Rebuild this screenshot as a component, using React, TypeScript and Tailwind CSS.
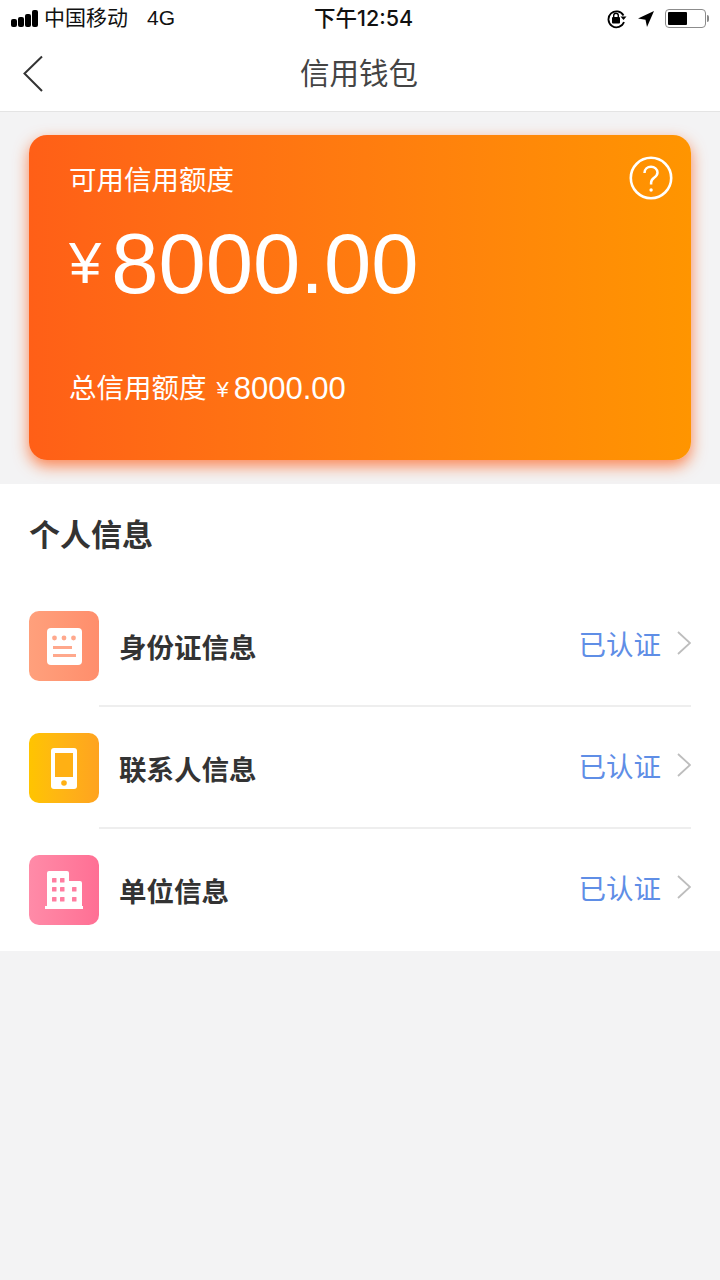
const font = "font-['Liberation_Sans','Noto_Sans_CJK_SC',sans-serif]";

function StatusBar() {
  return (
    <div className="flex h-[37px] items-center pl-[11px] pr-[11px] text-[21px] leading-[37px] text-[#111]">
      <div className="flex w-[303px] items-center">
        <div className="flex items-end gap-[1px]">
          <span className="h-[8px] w-[6px] rounded-[2px] bg-black" />
          <span className="h-[10px] w-[6px] rounded-[2px] bg-black" />
          <span className="h-[13px] w-[6px] rounded-[2px] bg-black" />
          <span className="h-[17px] w-[6px] rounded-[2px] bg-black" />
        </div>
        <span className="ml-[6px] -translate-y-[1px]">中国移动</span>
        <span className="ml-[19px] -translate-y-[1px]">4G</span>
      </div>
      <span className="font-['Inter','Noto_Sans_CJK_SC',sans-serif] text-[21.500px] font-medium">下午12:54</span>
      <div className="ml-auto flex items-center">
        <svg width="22" height="20" viewBox="0 0 22 20" fill="none">
          <path d="M17.500 6.500A8 8 0 1 0 18 13" stroke="#000" strokeWidth="1.800" />
          <path d="M14.500 7.500h6l-3 3.400z" fill="#000" />
          <rect x="6" y="8" width="8" height="6.500" rx="1" fill="#000" />
          <path d="M7.700 8V6.600a2.300 2.300 0 0 1 4.600 0V8" stroke="#000" strokeWidth="1.400" />
        </svg>
        <svg className="ml-[9px]" width="18" height="18" viewBox="0 0 18 18">
          <path d="M17 1 1 8.500l7.500 1.200L10 17z" fill="#000" />
        </svg>
        <div className="ml-[10px] flex items-center">
          <div className="h-[19px] w-[41px] rounded-[4px] border-[1.5px] border-[#8c8c8c] p-[2px]">
            <div className="h-full w-[19px] rounded-[1px] bg-black" />
          </div>
          <span className="ml-[1px] h-[7px] w-[2px] rounded-r-[2px] bg-[#888]" />
        </div>
      </div>
    </div>
  );
}

function NavBar() {
  return (
    <div className="relative flex h-[75px] items-center justify-center border-b border-[#e4e4e4]">
      <svg className="absolute left-[22px] top-[18px]" width="22" height="38" viewBox="0 0 22 38" fill="none">
        <path d="M20 1.500 2.500 18.500 20 36" stroke="#333" strokeWidth="2" />
      </svg>
      <span className="-translate-x-[1px] text-[29.500px] text-[#444]">信用钱包</span>
    </div>
  );
}

function CreditCard() {
  return (
    <div className="bg-[#f3f3f4] px-[29px] pb-[24px] pt-[23px]">
      <div className="relative h-[325px] rounded-[18px] bg-gradient-to-r from-[#ff5f17] to-[#ff9500] pl-[40px] text-white shadow-[0_6px_15px_rgba(255,90,20,0.72)]">
        <svg className="absolute right-[18px] top-[21px]" width="44" height="44" viewBox="0 0 44 44" fill="none">
          <circle cx="22" cy="22" r="20.200" stroke="#fff" strokeWidth="2.600" />
          <path d="M15.500 17c0-4 3-6.300 6.500-6.300s6.500 2.400 6.500 5.800c0 2.600-1.500 3.900-3.400 5.300-2 1.500-3 2.600-3 5v1.700" stroke="#fff" strokeWidth="2.500" />
          <circle cx="22.100" cy="34" r="1.700" fill="#fff" />
        </svg>
        <div className="pt-[26px] text-[27.500px] leading-[40px]">可用信用额度</div>
        <div className="mt-[16px] flex h-[92px] items-center">
          <span className="text-[58px] leading-none">¥</span>
          <span className="ml-[10px] text-[85px] leading-none">8000.00</span>
        </div>
        <div className="mt-[58px] flex items-center text-[27.500px] leading-[40px]">
          <span>总信用额度</span>
          <span className="ml-[10px] mt-[3px] text-[22px]">¥</span>
          <span className="ml-[5px] text-[31px]">8000.00</span>
        </div>
      </div>
    </div>
  );
}

function IdIcon() {
  return (
    <svg width="35" height="37" viewBox="0 0 35 37">
      <rect width="35" height="37" rx="4" fill="#fff" />
      <circle cx="7.500" cy="10" r="2.400" fill="#ffa88c" />
      <circle cx="17" cy="10" r="2.400" fill="#ffa88c" />
      <circle cx="26.500" cy="10" r="2.400" fill="#ffa88c" />
      <rect x="6" y="18" width="19" height="3" fill="#ffa88c" />
      <rect x="6" y="26" width="23" height="3" fill="#ffa88c" />
    </svg>
  );
}

function PhoneIcon() {
  return (
    <svg width="26" height="41" viewBox="0 0 26 41">
      <rect width="26" height="41" rx="3" fill="#fff" />
      <rect x="4" y="5" width="18" height="24" fill="#ffb014" />
      <circle cx="13" cy="35" r="2.800" fill="#ffb014" />
    </svg>
  );
}

function BuildingIcon() {
  const windows = [
    [7, 7], [15, 7], [7, 16], [15, 16], [27, 16], [7, 26], [15, 26], [27, 26],
  ];
  return (
    <svg width="38" height="38" viewBox="0 0 38 38">
      <path d="M2 36V2a2 2 0 0 1 2-2h18a2 2 0 0 1 2 2v8h11a2 2 0 0 1 2 2v24z" fill="#fff" />
      <rect y="35" width="38" height="3" fill="#fff" />
      {windows.map(([x, y]) => (
        <rect key={`${x}-${y}`} x={x} y={y} width="4.500" height="4.500" rx="0.5" fill="#ff7da0" />
      ))}
    </svg>
  );
}

const rows = [
  { name: "身份证信息", bg: "bg-gradient-to-r from-[#ffa07c] to-[#ff8e6c]", icon: <IdIcon /> },
  { name: "联系人信息", bg: "bg-gradient-to-r from-[#ffc400] to-[#ffa31f]", icon: <PhoneIcon /> },
  { name: "单位信息", bg: "bg-gradient-to-r from-[#ff8ba8] to-[#ff6f94]", icon: <BuildingIcon /> },
];

function InfoRow({ row, last }: { row: (typeof rows)[number]; last: boolean }) {
  return (
    <div className="relative flex h-[122px] items-center">
      <div className={`flex h-[70px] w-[70px] items-center justify-center rounded-[10px] ${row.bg}`}>
        {row.icon}
      </div>
      <span className="ml-[20px] translate-y-[3px] text-[27.500px] font-semibold text-[#333]">{row.name}</span>
      <span className="ml-auto text-[27.500px] text-[#5f8ee6]">已认证</span>
      <svg className="ml-[16px] -translate-y-[3px]" width="14" height="24" viewBox="0 0 14 24" fill="none">
        <path d="M1 1l12 11L1 23" stroke="#bdbdbd" strokeWidth="1.800" />
      </svg>
      {!last && <div className="absolute bottom-0 left-[70px] right-0 h-[2px] bg-[#eeeeee]" />}
    </div>
  );
}

export default function App() {
  return (
    <div className={`flex min-h-[1280px] flex-col bg-[#f3f3f4] ${font}`}>
      <div className="bg-white">
        <StatusBar />
        <NavBar />
      </div>
      <CreditCard />
      <div className="h-[467px] bg-white px-[29px]">
        <div className="pt-[30px] text-[31px] font-semibold leading-[44px] text-[#333]">个人信息</div>
        <div className="mt-[27px]">
          {rows.map((row, i) => (
            <InfoRow key={row.name} row={row} last={i === rows.length - 1} />
          ))}
        </div>
      </div>
    </div>
  );
}
